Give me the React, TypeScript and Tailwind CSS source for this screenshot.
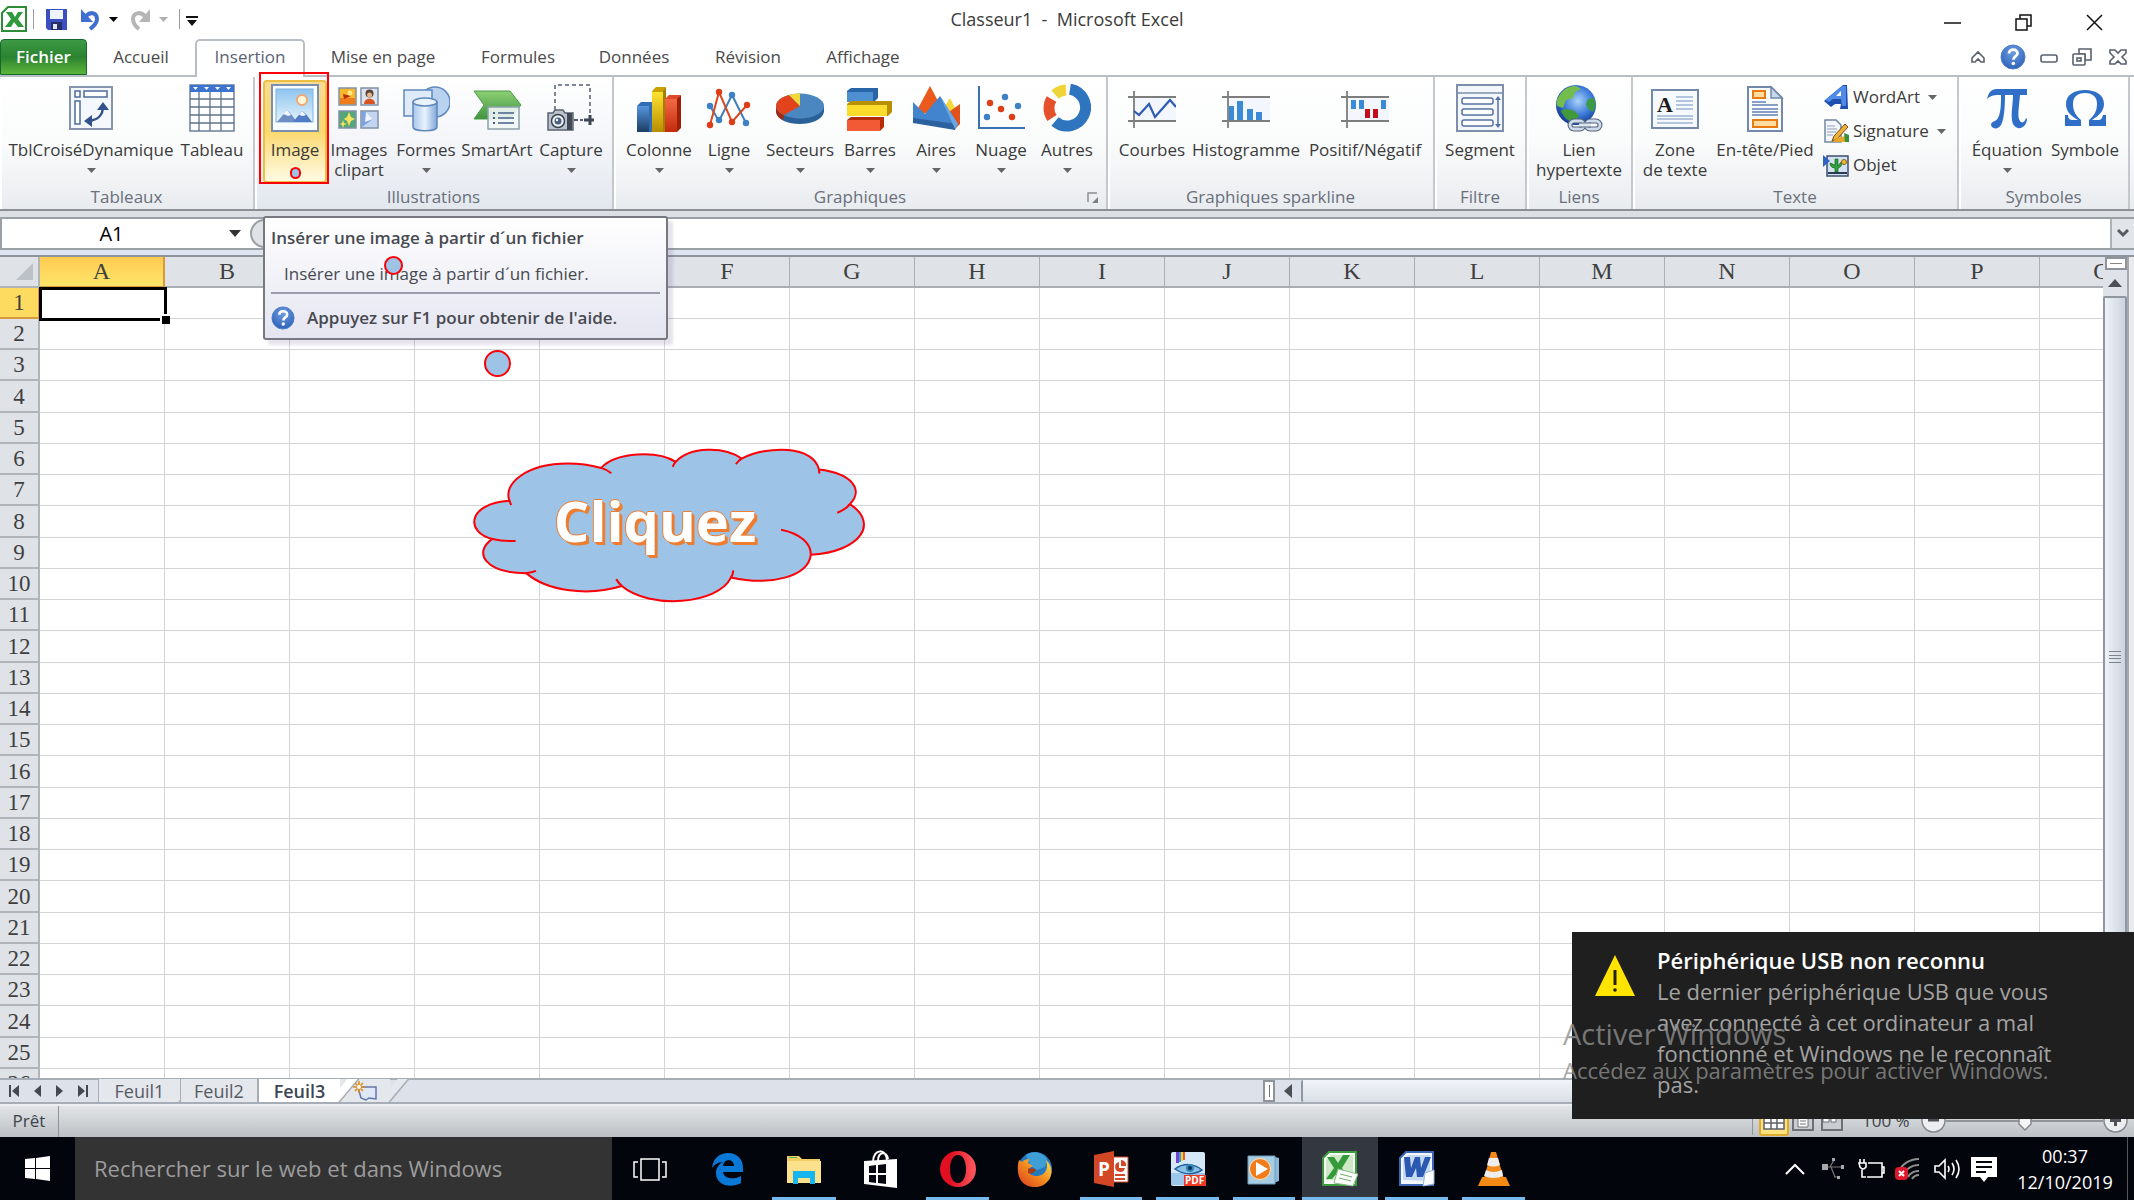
import React from "react";

type Kids = { children?: React.ReactNode };

/* ---------- shared drawing helpers ---------- */

function Icon({ children, w = 48, h = 48, box }: Kids & { w?: number; h?: number; box?: string }) {
  return (
    <svg width={w} height={h} viewBox={box ?? `0 0 ${w} ${h}`} aria-hidden="true" className="block shrink-0">
      {children}
    </svg>
  );
}

function Caret({ className = "text-[#666]" }: { className?: string }) {
  return (
    <svg width="9" height="5" viewBox="0 0 9 5" aria-hidden="true" className={`shrink-0 ${className}`}>
      <path d="M0 0h9L4.500 5z" fill="currentColor" />
    </svg>
  );
}

function HelpIcon({ size = 26 }: { size?: number }) {
  return (
    <svg width={size} height={size} viewBox="0 0 26 26" aria-hidden="true">
      <defs>
        <radialGradient id="help" cx="0.5" cy="0.3" r="0.7">
          <stop offset="0" stopColor="#6e9de0" />
          <stop offset="1" stopColor="#2f62b8" />
        </radialGradient>
      </defs>
      <circle cx="13" cy="13" r="12" fill="url(#help)" stroke="#4c7fcb" />
      <path d="M9 9.500c0-5 8.500-5 8.500-.3 0 3.300-4.200 3-4.200 6.600" fill="none" stroke="#fff" strokeWidth="2.800" />
      <circle cx="13.300" cy="19.500" r="1.800" fill="#fff" />
    </svg>
  );
}

/* ---------- ribbon icons ---------- */

const PivotIcon = () => (
  <Icon>
    <rect x="3" y="3" width="42" height="42" fill="#f4f7fb" stroke="#8595ad" strokeWidth="2" />
    <g fill="#fff" stroke="#4d6c9c" strokeWidth="1.500">
      <rect x="8" y="7" width="5" height="6" />
      <rect x="17" y="7" width="23" height="6" />
      <rect x="8" y="17" width="5" height="23" />
    </g>
    <path d="M21 37c10-1 15-5 15-15" fill="none" stroke="#33528c" strokeWidth="2.500" />
    <path d="M17 37l8-6v12zM36 18l6 8H30z" fill="#33528c" />
  </Icon>
);

const TableIcon = () => (
  <Icon>
    <rect x="2" y="1" width="44" height="46" fill="#fff" stroke="#6d7f9c" strokeWidth="1.500" />
    <rect x="2" y="1" width="44" height="7" fill="#3a74cf" />
    <path d="M5 3h5l-2.500 3zM16 3h5l-2.500 3zM27 3h5l-2.500 3zM38 3h5l-2.500 3z" fill="#fff" />
    <path d="M2 15h44M2 23h44M2 31h44M2 39h44M11 8v39M22 8v39M33 8v39" stroke="#5f738f" strokeWidth="1.300" />
  </Icon>
);

const PictureIcon = () => (
  <Icon>
    <defs>
      <linearGradient id="sky" x1="0" y1="0" x2="0" y2="1">
        <stop offset="0" stopColor="#8fc4ee" />
        <stop offset="1" stopColor="#e3f3fc" />
      </linearGradient>
    </defs>
    <rect x="1" y="1" width="46" height="46" fill="#f9fcff" stroke="#7a8fb0" strokeWidth="2" />
    <rect x="5" y="5" width="37" height="33" fill="url(#sky)" stroke="#7fb2de" />
    <circle cx="31" cy="16" r="5" fill="#fff6d8" stroke="#f0a874" strokeWidth="2" />
    <path d="M6 38l10-12 4 4 6 8z" fill="#6f8fc4" />
    <path d="M12 30l4-4 4 5-3 1-2-1z" fill="#f2f6fc" />
    <path d="M22 38l9-11 4 3 6 8z" fill="#4f7cc4" />
    <path d="M28 31l3-4 4 4-3 1z" fill="#f2f6fc" />
  </Icon>
);

const ClipartIcon = () => (
  <Icon>
    <rect x="4" y="4" width="17" height="17" fill="#f9b72b" stroke="#8090a8" strokeWidth="1.500" />
    <path d="M5 14h15v6H5z" fill="#ef7d1b" />
    <path d="M8 10l8 2-7 3z" fill="#b92b12" />
    <circle cx="15" cy="9" r="2.500" fill="#ffe784" />
    <rect x="26" y="4" width="17" height="17" fill="#dbe3ee" stroke="#8090a8" strokeWidth="1.500" />
    <circle cx="34.500" cy="9.500" r="4" fill="#5c4338" />
    <circle cx="34.500" cy="11" r="2.500" fill="#e8b48c" />
    <path d="M29 20c0-7 11-7 11 0z" fill="#d9541e" />
    <rect x="4" y="27" width="17" height="17" fill="#56a67a" stroke="#8090a8" strokeWidth="1.500" />
    <path d="M14 28l2 5 4 2-4 2-2 5-2-5-3-2 3-2zM8 36l1 3 3 1-3 1-1 3-1-3-2-1 2-1z" fill="#f3e35c" />
    <rect x="26" y="27" width="17" height="17" fill="#c3d5f1" stroke="#8090a8" strokeWidth="1.500" />
    <path d="M31 28l7 7-11 8V28z" fill="#7fa3df" />
    <path d="M31 28l7 7-8 3z" fill="#eef4fd" />
  </Icon>
);

const ShapesIcon = () => (
  <Icon>
    <defs>
      <linearGradient id="cyl" x1="0" y1="0" x2="1" y2="0">
        <stop offset="0" stopColor="#a8c6ea" />
        <stop offset="0.5" stopColor="#e9f3fd" />
        <stop offset="1" stopColor="#7fa6d8" />
      </linearGradient>
    </defs>
    <circle cx="33" cy="18" r="15" fill="#b9d2f0" stroke="#5f88bd" strokeWidth="1.500" />
    <rect x="2" y="6" width="28" height="26" fill="#dfebf8" stroke="#5f88bd" strokeWidth="1.500" />
    <path d="M11 18v25c0 5 24 5 24 0V18z" fill="url(#cyl)" stroke="#5f88bd" strokeWidth="1.500" />
    <ellipse cx="23" cy="18" rx="12" ry="4" fill="#eaf3fc" stroke="#5f88bd" strokeWidth="1.500" />
  </Icon>
);

const SmartArtIcon = () => (
  <Icon>
    <defs>
      <linearGradient id="sa" x1="0" y1="0" x2="0" y2="1">
        <stop offset="0" stopColor="#8ccf74" />
        <stop offset="1" stopColor="#3f9440" />
      </linearGradient>
    </defs>
    <path d="M1 7h36l11 14-11 14H1l10-14z" fill="url(#sa)" stroke="#4a9a49" />
    <rect x="15" y="23" width="31" height="22" fill="#f1f6f6" fillOpacity="0.9" stroke="#8ba1a8" strokeWidth="1.500" />
    <path d="M25 29h16M25 34h16M25 39h16" stroke="#46608c" strokeWidth="1.500" />
    <path d="M20 29h2M20 34h2M20 39h2" stroke="#46608c" strokeWidth="2" />
  </Icon>
);

const CaptureIcon = () => (
  <Icon>
    <path d="M8 26V1h35v30" fill="none" stroke="#555f70" strokeWidth="1.500" strokeDasharray="4 3" />
    <path d="M43 31v10M37 36h10" stroke="#3c4654" strokeWidth="3" />
    <path d="M27 36h9" stroke="#555f70" strokeWidth="2" strokeDasharray="4 2" />
    <path d="M1 29h5l2-3h8l2 3h8v17H1z" fill="#bcc3cc" stroke="#596372" strokeWidth="1.500" />
    <rect x="20" y="29" width="5" height="17" fill="#404954" />
    <circle cx="11" cy="37" r="6.500" fill="#eef1f5" stroke="#39424e" strokeWidth="1.500" />
    <circle cx="11" cy="37" r="3.500" fill="#47617f" />
    <circle cx="10" cy="36" r="1.200" fill="#fff" />
  </Icon>
);

const ColumnIcon = () => (
  <Icon>
    <defs>
      <linearGradient id="cb" x1="0" y1="0" x2="0" y2="1">
        <stop offset="0" stopColor="#5596de" />
        <stop offset="1" stopColor="#1d3c62" />
      </linearGradient>
      <linearGradient id="cy" x1="0" y1="0" x2="0" y2="1">
        <stop offset="0" stopColor="#ffe32f" />
        <stop offset="1" stopColor="#b88d00" />
      </linearGradient>
      <linearGradient id="cr" x1="0" y1="0" x2="0" y2="1">
        <stop offset="0" stopColor="#f36a44" />
        <stop offset="1" stopColor="#c22a0c" />
      </linearGradient>
    </defs>
    <path d="M2 22l4-4h11v30H2z" fill="#2f6cb3" />
    <rect x="2" y="22" width="12" height="26" fill="url(#cb)" />
    <path d="M17 7l4-4h10l-3 5v40H17z" fill="#c9a200" />
    <path d="M28 7l3-4v45h-3z" fill="#a47f00" />
    <rect x="17" y="8" width="11" height="40" fill="url(#cy)" />
    <path d="M30 15l4-4h12l-4 5z" fill="#e04a28" />
    <path d="M42 15l4-4v33l-4 4z" fill="#9f1f06" />
    <rect x="30" y="15" width="12" height="33" fill="url(#cr)" />
  </Icon>
);

const LineIcon = () => (
  <Icon>
    <path d="M5 22l9 15 13-26 14 28" fill="none" stroke="#3f7fb8" strokeWidth="2" />
    <path d="M5 41l9-33 13 30 15-17" fill="none" stroke="#d9471f" strokeWidth="2" />
    <g fill="#3f7fc4"><circle cx="5" cy="22" r="3.200" /><circle cx="14" cy="36" r="3.200" /><circle cx="27" cy="11" r="3.200" /><circle cx="41" cy="39" r="3.200" /></g>
    <g fill="#dd3e17"><circle cx="5" cy="41" r="3.200" /><circle cx="14" cy="8" r="3.200" /><circle cx="27" cy="38" r="3.200" /><circle cx="42" cy="21" r="3.200" /></g>
  </Icon>
);

const PieIcon = () => (
  <Icon>
    <path d="M0 23v5c2 16 45 16 48 0v-5z" fill="#2b6199" />
    <path d="M0 23v5c1 4 3 6 7 8l1-5z" fill="#a52a0d" />
    <ellipse cx="24" cy="22" rx="24" ry="12.500" fill="#4a86c0" />
    <path d="M24 22L8 31C-4 25-2 15 13 11z" fill="#e2431b" />
    <path d="M24 22L13 11q5-2 11-1.500z" fill="#f4d836" />
  </Icon>
);

const BarIcon = () => (
  <Icon>
    <path d="M1 7l4-3h27v10l-4 4H1z" fill="#2764a8" />
    <rect x="1" y="8" width="26" height="10" fill="#4e8fd2" />
    <path d="M1 20l4-3h41v11l-4 4H1z" fill="#b89000" />
    <rect x="1" y="21" width="40" height="11" fill="#fbdc2c" />
    <path d="M1 36l4-3h33v10l-4 4H1z" fill="#b52c0d" />
    <rect x="1" y="36" width="33" height="11" fill="#f15a35" />
  </Icon>
);

const AreaIcon = () => (
  <Icon>
    <path d="M28 30l10-16 6 12v14z" fill="#f5d93a" />
    <path d="M34 30l14-10v20l-4 4z" fill="#e2521d" />
    <path d="M3 30L18 2l14 26z" fill="#ea5a1c" />
    <path d="M1 18l12 12 15-18 18 28-3 5L1 38z" fill="#4284cd" />
    <path d="M1 34l44 6-2 6L1 39z" fill="#2c61a0" />
    <path d="M28 12l18 28-3 5z" fill="#6ba6e4" />
  </Icon>
);

const ScatterIcon = () => (
  <Icon>
    <path d="M2 2v42h46" fill="none" stroke="#3a72b0" strokeWidth="2" />
    <g fill="#3f7fc4"><circle cx="10" cy="33" r="3.200" /><circle cx="28" cy="13" r="3.200" /><circle cx="41" cy="22" r="3.200" /></g>
    <g fill="#dd3e17"><circle cx="13" cy="19" r="3.200" /><circle cx="24" cy="25" r="3.200" /><circle cx="35" cy="33" r="3.200" /></g>
  </Icon>
);

const DonutIcon = () => (
  <Icon>
    <g fill="none" strokeWidth="11">
      <path d="M27 5.200A18.500 18.500 0 1 1 12 37.500" stroke="#2f74bf" />
      <path d="M9 34A18 18 0 0 1 8.500 15" stroke="#e5512b" />
      <path d="M12 10.500A18 18 0 0 1 23 6" stroke="#f0d437" />
    </g>
  </Icon>
);

function Spark({ children }: Kids) {
  return (
    <Icon>
      <rect x="5" y="13" width="43" height="23" fill="#f3f7fd" />
      <path d="M0 13h48M0 37h48M6 7v37" stroke="#7d7d7d" strokeWidth="1.800" />
      {children}
    </Icon>
  );
}

const SparkLineIcon = () => (
  <Spark><path d="M6 27l5 4 10-11 6 13 15-17 6 7" fill="none" stroke="#2f5bb5" strokeWidth="2.200" /></Spark>
);
const SparkColIcon = () => (
  <Spark><path d="M7 22h5v14H7zM15 17h6v19h-6zM25 25h6v11h-6zM34 28h6v8h-6z" fill="#3b8ad6" /></Spark>
);
const WinLossIcon = () => (
  <Spark>
    <path d="M10 16h5v9h-5zM18 16h5v9h-5zM40 16h5v9h-5z" fill="#3b8ad6" />
    <path d="M24 25h5v9h-5zM32 25h5v9h-5z" fill="#c40d1c" />
  </Spark>
);

const SlicerIcon = () => (
  <Icon>
    <rect x="1" y="1" width="46" height="46" fill="#f3f6fb" stroke="#7d8fa9" strokeWidth="2" />
    <path d="M1 9h46" stroke="#7d8fa9" strokeWidth="1.500" />
    <g fill="#fff" stroke="#5671a4" strokeWidth="1.500">
      <rect x="6" y="14" width="31" height="6" rx="2" />
      <rect x="6" y="25" width="31" height="6" rx="2" />
      <rect x="6" y="36" width="31" height="6" rx="2" />
    </g>
    <path d="M42 15v26" stroke="#5671a4" strokeWidth="1.500" />
    <path d="M42 12l3 4h-6zM42 44l3-4h-6z" fill="#5671a4" />
  </Icon>
);

const GlobeIcon = () => (
  <Icon>
    <defs>
      <radialGradient id="globe" cx="0.55" cy="0.4" r="0.6">
        <stop offset="0" stopColor="#a9d3f8" />
        <stop offset="0.6" stopColor="#3b78d8" />
        <stop offset="1" stopColor="#143d97" />
      </radialGradient>
    </defs>
    <circle cx="21" cy="21" r="20" fill="url(#globe)" />
    <path d="M4 12C9 4 15 2 21 2l5 3-6 3-2 6-7 2-3 8-6-2c-1-4 0-7 2-10z" fill="#74bd4d" />
    <path d="M9 25l9 1 6 5-4 8c-7-1-12-7-14-12z" fill="#429a3c" />
    <path d="M33 15l6-1c2 5 2 9-1 14l-5-3-2-5z" fill="#3d9a44" />
    <g fill="none" strokeWidth="5">
      <rect x="15" y="37" width="14" height="8" rx="4" stroke="#54657e" />
      <rect x="31" y="37" width="14" height="8" rx="4" stroke="#54657e" />
    </g>
    <g fill="none" strokeWidth="2.800">
      <rect x="15" y="37" width="14" height="8" rx="4" stroke="#cfdbea" />
      <rect x="31" y="37" width="14" height="8" rx="4" stroke="#cfdbea" />
    </g>
    <path d="M24 41h12" stroke="#54657e" strokeWidth="5" />
    <path d="M24 41h12" stroke="#dbe5f1" strokeWidth="3" />
  </Icon>
);

const TextBoxIcon = () => (
  <Icon>
    <rect x="1" y="6" width="46" height="38" fill="#f6f9fd" stroke="#7489aa" strokeWidth="2" />
    <text x="6" y="28" fontFamily="Liberation Serif" fontWeight="700" fontSize="22" fill="#1b1b1b">A</text>
    <path d="M25 13h17M25 17h17M25 21h17M25 25h17M6 32h36M6 35h36M6 39h36" stroke="#9fb4d4" strokeWidth="1.300" />
  </Icon>
);

const HeaderFooterIcon = () => (
  <Icon>
    <path d="M7 3h23l11 11v33H7z" fill="#fafcff" stroke="#7489aa" strokeWidth="2" />
    <path d="M30 3v11h11z" fill="#c8d8ec" stroke="#7489aa" strokeWidth="1.500" />
    <rect x="12" y="7" width="12" height="7" fill="#ffdca0" stroke="#e87b12" strokeWidth="2" />
    <rect x="12" y="36" width="24" height="7" fill="#ffdca0" stroke="#e87b12" strokeWidth="2" />
    <path d="M11 18h14M11 21h26M11 25h26M11 28h26M11 31h26" stroke="#6580b3" strokeWidth="1.400" />
  </Icon>
);

const PiIcon = () => (
  <Icon>
    <path d="M4 15C6 7 9 5 15 5h29v6h-7c-1 12-3 22 0 26 2 3 5 1 6-3l1 1c-1 12-14 12-15 1-1-8 1-16 1-25h-8c0 12-1 25-4 30-3 5-9 4-10 0 0-4 5-3 7-7 3-6 3-14 3-23-6 0-10 0-14 4z" fill="#2f6fc8" />
  </Icon>
);

const OmegaIcon = () => (
  <Icon>
    <path d="M4 42V31h3c0 4 2 5 5 5h5C8 31 5 26 5 20 5 11 13 6 24 6s19 5 19 14c0 6-4 11-12 16h6c3 0 4-1 5-5h3v11H28v-6c5-4 8-9 8-16 0-7-4-11-12-11s-12 4-12 11c0 7 3 12 8 16v6z" fill="#2f6fc8" />
  </Icon>
);

const WordArtIcon = () => (
  <Icon w={26} h={26}>
    <path d="M1 17L20 1h4l1 24h-8l1-5h-6l-4 3z" fill="#1f4fae" />
    <path d="M2 16L19 2h4v20h-4l-1-7H10l-4 3z" fill="#4f8be6" />
    <path d="M13 12l5-5v5z" fill="#fff" />
  </Icon>
);
const SignatureIcon = () => (
  <Icon w={26} h={26}>
    <path d="M2 2h11l5 5v17H2z" fill="#f3f6fa" stroke="#7287a3" strokeWidth="1.500" />
    <path d="M4 8h8M4 11h10M4 14h9M4 17h6" stroke="#8ea1bc" />
    <path d="M22 6l3 3-11 12-5 2 2-5z" fill="#f0b13a" stroke="#7a4a14" />
    <path d="M10 24c4-6 9-5 14-6v6z" fill="#e6a92a" />
    <path d="M21 15l5 2v7h-4z" fill="#3b8f3a" />
  </Icon>
);
const ObjectIcon = () => (
  <Icon w={26} h={26}>
    <rect x="4" y="4" width="21" height="20" fill="#d4e1f1" stroke="#3d4f6e" strokeWidth="1.500" />
    <path d="M0 3l7 6-7 6z" fill="#2f63c4" />
    <path d="M12 20v-4c-3 0-5-2-5-5l5 2V7h3v7l3-4c2 3-1 6-3 6v4z" fill="#2f9e3b" stroke="#166a22" strokeWidth="0.700" />
    <circle cx="21" cy="10" r="2.500" fill="#f0bb2e" stroke="#8a6514" />
    <path d="M5 21h19" stroke="#2b3a54" strokeWidth="2" />
  </Icon>
);

/* ---------- ribbon ---------- */

function BigButton({ icon, label, second, caret, width, active }: {
  icon: React.ReactNode; label: string; second?: string; caret?: boolean; width: string; active?: boolean;
}) {
  return (
    <button
      type="button"
      className={`flex shrink-0 flex-col items-center rounded-[4px] whitespace-nowrap ${width} ${
        active ? "h-[103px] border-2 border-[#eebf45] bg-linear-to-b from-[#f7dc93] via-[#fbd96c] to-[#fffbe3] pt-[2px]" : "pt-1"
      }`}
    >
      {icon}
      <span className="mt-[7px] leading-[21px]">{label}</span>
      {second && <span className="leading-[20px]">{second}</span>}
      {caret && <Caret className="mt-2 text-[#666]" />}
    </button>
  );
}

function Group({ title, width, pad, children, tint, launcher }: Kids & {
  title: string; width: string; pad: string; tint?: boolean; launcher?: boolean;
}) {
  return (
    <section
      aria-label={title}
      className={`relative flex shrink-0 flex-col border-r-2 border-[#c3c8ce] shadow-[inset_2px_0_0_#fff] ${width} ${
        tint ? "bg-linear-to-b from-white via-[#f3f5f9] to-[#e2e7ee]" : ""
      }`}
    >
      <div className={`flex flex-1 ${pad}`}>{children}</div>
      <h2 className="pb-px text-center text-[17px] leading-[22px] text-[#6a6f7b]">{title}</h2>
      {launcher && (
        <button type="button" aria-label={`Options ${title}`} className="absolute right-[7px] bottom-[5px]">
          <Icon w={12} h={12}>
            <path d="M1 10V1h9" fill="none" stroke="#8a8f96" strokeWidth="1.500" />
            <path d="M5 5l3 3 3-3v6H5l3-3z" fill="#7b8087" />
          </Icon>
        </button>
      )}
    </section>
  );
}

function SmallButton({ icon, label, caret }: { icon: React.ReactNode; label: string; caret?: boolean }) {
  return (
    <button type="button" className="flex h-[34px] items-center gap-1">
      {icon}
      <span>{label}</span>
      {caret && <Caret className="ml-1 text-[#666]" />}
    </button>
  );
}

function Ribbon() {
  return (
    <div className="relative flex h-[134px] border-b-2 border-[#8b9097] bg-linear-to-b from-white via-[#fafbfb] to-[#e9ecef] text-[17px] text-[#3b3b3b]">
      <Group title="Tableaux" width="w-[255px]" pad="pl-[3px] pt-[3px]">
        <BigButton icon={<PivotIcon />} label="TblCroiséDynamique" caret width="w-[176px]" />
        <BigButton icon={<TableIcon />} label="Tableau" width="w-[66px]" />
      </Group>
      <Group title="Illustrations" width="w-[359px]" pad="pl-[8px] pt-[3px]" tint>
        <BigButton icon={<PictureIcon />} label="Image" width="w-[64px]" active />
        <BigButton icon={<ClipartIcon />} label="Images" second="clipart" width="w-[64px]" />
        <BigButton icon={<ShapesIcon />} label="Formes" caret width="w-[70px]" />
        <BigButton icon={<SmartArtIcon />} label="SmartArt" width="w-[72px]" />
        <BigButton icon={<CaptureIcon />} label="Capture" caret width="w-[76px]" />
      </Group>
      <Group title="Graphiques" width="w-[494px]" pad="pl-[8px] pt-[3px]" launcher>
        <BigButton icon={<ColumnIcon />} label="Colonne" caret width="w-[74px]" />
        <BigButton icon={<LineIcon />} label="Ligne" caret width="w-[66px]" />
        <BigButton icon={<PieIcon />} label="Secteurs" caret width="w-[76px]" />
        <BigButton icon={<BarIcon />} label="Barres" caret width="w-[64px]" />
        <BigButton icon={<AreaIcon />} label="Aires" caret width="w-[68px]" />
        <BigButton icon={<ScatterIcon />} label="Nuage" caret width="w-[62px]" />
        <BigButton icon={<DonutIcon />} label="Autres" caret width="w-[70px]" />
      </Group>
      <Group title="Graphiques sparkline" width="w-[327px]" pad="pl-[5px] pt-[3px]">
        <BigButton icon={<SparkLineIcon />} label="Courbes" width="w-[78px]" />
        <BigButton icon={<SparkColIcon />} label="Histogramme" width="w-[110px]" />
        <BigButton icon={<WinLossIcon />} label="Positif/Négatif" width="w-[128px]" />
      </Group>
      <Group title="Filtre" width="w-[92px]" pad="justify-center pt-[3px]">
        <BigButton icon={<SlicerIcon />} label="Segment" width="w-[76px]" />
      </Group>
      <Group title="Liens" width="w-[106px]" pad="justify-center pt-[3px]">
        <BigButton icon={<GlobeIcon />} label="Lien" second="hypertexte" width="w-[90px]" />
      </Group>
      <Group title="Texte" width="w-[326px]" pad="pl-[6px] pt-[3px]">
        <BigButton icon={<TextBoxIcon />} label="Zone" second="de texte" width="w-[72px]" />
        <BigButton icon={<HeaderFooterIcon />} label="En-tête/Pied" width="w-[108px]" />
        <div className="flex flex-col pl-[4px]">
          <SmallButton icon={<WordArtIcon />} label="WordArt" caret />
          <SmallButton icon={<SignatureIcon />} label="Signature" caret />
          <SmallButton icon={<ObjectIcon />} label="Objet" />
        </div>
      </Group>
      <Group title="Symboles" width="w-[171px]" pad="pl-[9px] pt-[3px]">
        <BigButton icon={<PiIcon />} label="Équation" caret width="w-[78px]" />
        <BigButton icon={<OmegaIcon />} label="Symbole" width="w-[78px]" />
      </Group>
      <div className="pointer-events-none absolute top-[-5px] left-[259px] h-[112px] w-[70px] border-2 border-[#fb0007]" />
      <div className="pointer-events-none absolute top-[90px] left-[290px] h-[12px] w-[11px] rounded-full border-2 border-[#fb0007] bg-[#9dc3e6]" />
    </div>
  );
}

/* ---------- title bar and tabs ---------- */

function TitleBar() {
  return (
    <header className="grid h-[38px] grid-cols-[1fr_auto_1fr] items-center bg-white">
      <div className="flex items-center pl-[1px]">
        <Icon w={26} h={26}>
          <path d="M7 1h18v24H1V7z" fill="#fff" stroke="#2e8b37" strokeWidth="2" />
          <path d="M5 6h6l3 5 3-5h5l-5 7 6 8h-6l-4-5-3 5H4l6-8z" fill="#2f9a3c" />
        </Icon>
        <span className="ml-[6px] h-5 w-px bg-[#9a9a9a]" />
        <button type="button" aria-label="Enregistrer" className="ml-[11px]">
          <Icon w={23} h={23}>
            <path d="M1 1h21v21H3l-2-2z" fill="#3b4fc0" />
            <path d="M5 2h13v9H5z" fill="#eef3fc" />
            <path d="M6 14h11v8H6z" fill="#272e63" />
            <path d="M8 16h4v5H8z" fill="#dfe5f5" />
          </Icon>
        </button>
        <button type="button" aria-label="Annuler" className="ml-3 flex items-center gap-2">
          <Icon w={21} h={24}>
            <path d="M6 9c5-5 11-3 11 3 0 4-3 7-7 10" fill="none" stroke="#3f6fd0" strokeWidth="4" />
            <path d="M1 2v13h12z" fill="#3f6fd0" />
          </Icon>
          <Caret className="text-black" />
        </button>
        <button type="button" aria-label="Rétablir" className="ml-3 flex items-center gap-2">
          <Icon w={21} h={24}>
            <path d="M15 9C10 4 3 6 3 12c0 4 2 7 6 10" fill="none" stroke="#b5b5b5" strokeWidth="4" />
            <path d="M20 2v13H9z" fill="#b5b5b5" />
          </Icon>
          <Caret className="text-[#b0b0b0]" />
        </button>
        <span className="ml-[11px] h-5 w-px bg-[#9a9a9a]" />
        <button type="button" aria-label="Personnaliser" className="mt-1 ml-[6px]">
          <Icon w={12} h={10}>
            <path d="M0 0h12v2H0zM1 4h10L6 10z" fill="#111" />
          </Icon>
        </button>
      </div>
      <h1 className="text-[18px] whitespace-pre text-[#3a3a3a]">Classeur1  -  Microsoft Excel</h1>
      <div className="flex items-center justify-end gap-[54px] pt-[6px] pr-[31px]">
        <button type="button" aria-label="Réduire"><Icon w={17} h={17}><path d="M0 9h17" stroke="#111" strokeWidth="1.500" /></Icon></button>
        <button type="button" aria-label="Restaurer">
          <Icon w={17} h={17}><path d="M1 5h11v11H1zM5 5V1h11v11h-4" fill="none" stroke="#111" strokeWidth="1.500" /></Icon>
        </button>
        <button type="button" aria-label="Fermer"><Icon w={17} h={17}><path d="M1 1l15 15M16 1L1 16" stroke="#111" strokeWidth="1.500" /></Icon></button>
      </div>
    </header>
  );
}

const menuTabs: [string, string][] = [
  ["Mise en page", "w-[156px]"],
  ["Formules", "w-[114px]"],
  ["Données", "w-[118px]"],
  ["Révision", "w-[110px]"],
  ["Affichage", "w-[120px]"],
];

function MenuTabs() {
  return (
    <nav className="flex h-[39px] items-stretch border-b-2 border-[#b9bec5] bg-white text-[17px] text-[#4a4a4a]">
      <button type="button" className="mt-px w-[87px] rounded-t-[4px] border border-[#15692a] bg-linear-to-b from-[#3d9a45] via-[#2a8330] to-[#5cb53b] font-semibold text-white">Fichier</button>
      <button type="button" className="w-[108px]">Accueil</button>
      <button type="button" className="mt-px -mb-[2px] w-[110px] rounded-t-[5px] border-2 border-b-0 border-[#b9bec5] bg-white pb-1 text-[#5a6272]">Insertion</button>
      {menuTabs.map(([t, w]) => (
        <button key={t} type="button" className={w}>{t}</button>
      ))}
      <div className="ml-auto flex items-center gap-[14px] pr-[7px]">
        <button type="button" aria-label="Réduire le ruban">
          <Icon w={16} h={14}><path d="M2 8l6-6 6 6v4h-3L8 9l-3 3H2z" fill="#fff" stroke="#59616d" strokeWidth="1.600" /></Icon>
        </button>
        <button type="button" aria-label="Aide"><HelpIcon /></button>
        <button type="button" aria-label="Réduire la fenêtre" className="mt-1">
          <Icon w={18} h={10}><rect x="1" y="1" width="16" height="7" rx="2" fill="#fff" stroke="#59616d" strokeWidth="1.600" /></Icon>
        </button>
        <button type="button" aria-label="Restaurer la fenêtre">
          <Icon w={20} h={18}>
            <path d="M7 1h12v11h-6V6H7z" fill="#fff" stroke="#59616d" strokeWidth="1.600" />
            <rect x="1" y="6" width="12" height="11" rx="1" fill="#fff" stroke="#59616d" strokeWidth="1.600" />
            <rect x="5" y="10" width="4" height="3" fill="none" stroke="#59616d" strokeWidth="1.600" />
          </Icon>
        </button>
        <button type="button" aria-label="Fermer la fenêtre" className="ml-[3px]">
          <Icon w={18} h={16}>
            <path d="M1 1h5l3 3 3-3h5v3l-4 4 4 4v3h-5l-3-3-3 3H1v-3l4-4-4-4z" fill="#fff" stroke="#59616d" strokeWidth="1.600" />
          </Icon>
        </button>
      </div>
    </nav>
  );
}

/* ---------- formula bar ---------- */

function FormulaBar() {
  return (
    <div className="border-t-[6px] border-[#dcdfe3] bg-[#dfe4ec]">
      <div className="flex h-[33px] border-y-2 border-[#9ba0a6] bg-white">
        <div className="flex w-[250px] items-center border-l-2 border-[#9ba0a6]">
          <input aria-label="Zone Nom" defaultValue="A1" className="w-[219px] bg-transparent text-center text-[20px] text-black outline-none" />
          <svg width="12" height="7" viewBox="0 0 12 7" aria-hidden="true" className="ml-2"><path d="M0 0h12L6 7z" fill="#333" /></svg>
        </div>
        <div className="w-[30px] rounded-l-full border-2 border-[#9ba0a6] bg-[#dfe3e8]" />
        <input aria-label="Barre de formule" className="flex-1 bg-transparent outline-none" />
        <button type="button" aria-label="Développer la barre" className="flex w-[24px] items-center justify-center border-l-2 border-[#aeb3b9] bg-[#e2e5e9]">
          <Icon w={12} h={9}><path d="M1 1l5 5 5-5" fill="none" stroke="#555b63" strokeWidth="3" /></Icon>
        </button>
      </div>
      <div className="h-[7px] border-b-2 border-[#8f949b] bg-[#dfe5f0]" />
    </div>
  );
}

/* ---------- grid ---------- */

const columns = "ABCDEFGHIJKLMNOPQ".split("");
const rows = Array.from({ length: 26 }, (_, i) => i + 1);

function Sheet() {
  return (
    <div className="flex min-h-0 flex-1 bg-white">
      <div className="min-w-0 flex-1 overflow-hidden">
        <table className="w-[2165px] table-fixed border-separate border-spacing-0 font-[Liberation_Serif,serif] text-[24px] text-[#3f3f3f]">
          <thead>
            <tr className="h-[31px] bg-[#dfe3e8]">
              <th className="w-[40px] border-r-2 border-b-2 border-[#b0b5bc] p-0">
                <svg width="17" height="17" viewBox="0 0 17 17" aria-hidden="true" className="ml-4"><path d="M17 0v17H0z" fill="#bcc1c7" /></svg>
              </th>
              {columns.map((c) => (
                <th
                  key={c}
                  scope="col"
                  className={`border-b-2 p-0 leading-[29px] font-normal ${
                    c === "A" ? "border-r-2 border-[#d69b3c] bg-linear-to-b from-[#fdcb4f] to-[#fee66b]" : "border-r border-[#a9aeb5]"
                  }`}
                >
                  {c}
                </th>
              ))}
            </tr>
          </thead>
          <tbody>
            {rows.map((r) => (
              <tr key={r} className="h-[31px] nth-[4n]:h-[32px]">
                <th
                  scope="row"
                  className={`border-r-2 border-b-2 p-0 text-center text-[23px] leading-[29px] font-normal ${
                    r === 1 ? "border-[#d69b3c] bg-[#fdda60]" : "border-[#b0b5bc] bg-[#dfe3e8]"
                  }`}
                >
                  {r}
                </th>
                {columns.map((c) => (
                  <td key={c} className="relative border-r border-b border-[#d2d5d6] p-0">
                    {r === 1 && c === "A" && (
                      <div className="absolute -top-px -right-[3px] -bottom-[3px] -left-px z-10 border-[3px] border-black">
                        <span className="absolute -right-[6px] -bottom-[6px] h-[10px] w-[10px] border-t-2 border-l-2 border-white bg-black" />
                      </div>
                    )}
                  </td>
                ))}
              </tr>
            ))}
          </tbody>
        </table>
      </div>
      <div className="flex w-[31px] shrink-0 bg-[#e9ebef]">
        <div className="flex w-[26px] flex-col border-r-2 border-[#a4a9b0] bg-[#dfe3e9]">
          <div className="ml-[2px] flex h-[13px] items-center justify-center border-2 border-[#8f949b] bg-white"><span className="h-px w-3 bg-[#888]" /></div>
          <button type="button" aria-label="Défiler vers le haut" className="flex h-[26px] items-center justify-center">
            <Icon w={14} h={8}><path d="M0 8l7-8 7 8z" fill="#4c4f54" /></Icon>
          </button>
          <div className="flex flex-1 justify-center rounded-[2px] border-2 border-[#8f97a2] bg-linear-to-r from-[#f0f3f8] to-[#ccd3de]">
            <div className="mt-[353px] flex h-[12px] flex-col justify-between">
              {[0, 1, 2, 3].map((i) => <span key={i} className="h-px w-3 bg-[#7c828b]" />)}
            </div>
          </div>
        </div>
      </div>
    </div>
  );
}

/* ---------- sheet tabs, status bar ---------- */

function SheetTab({ label, active, width, last }: { label: string; active?: boolean; width: string; last?: boolean }) {
  return (
    <button
      type="button"
      className={`relative flex h-[24px] items-center justify-center border-b border-[#a7adb6] after:absolute after:inset-y-0 after:-right-[10px] after:w-[12px] after:-skew-x-[40deg] after:border-r-2 after:border-[#a7adb6] ${width} ${
        active ? "z-10 border-l-2 bg-white font-semibold text-[#3d4654] after:bg-white" : "border-l bg-[#e4e7eb] text-[#565b63] after:bg-[#e4e7eb]"
      } ${last ? "after:hidden" : ""}`}
    >
      <span className="relative z-10">{label}</span>
    </button>
  );
}

function SheetTabs() {
  return (
    <div className="flex h-[26px] border-t-2 border-b-2 border-[#a7adb6] bg-[#dce1ea] text-[18px] leading-[22px]">
      <div className="flex w-[98px] items-center justify-between pr-[10px] pl-[9px] text-[#434851]">
        <button type="button" aria-label="Première feuille"><Icon w={11} h={12}><path d="M0 0h2v12H0zM10 0v12L3 6z" fill="currentColor" /></Icon></button>
        <button type="button" aria-label="Feuille précédente"><Icon w={8} h={12}><path d="M7 0v12L0 6z" fill="currentColor" /></Icon></button>
        <button type="button" aria-label="Feuille suivante"><Icon w={8} h={12}><path d="M1 0v12l7-6z" fill="currentColor" /></Icon></button>
        <button type="button" aria-label="Dernière feuille"><Icon w={11} h={12}><path d="M9 0h2v12H9zM1 0v12l7-6z" fill="currentColor" /></Icon></button>
      </div>
      <div className="-mt-px flex">
        <SheetTab label="Feuil1" width="w-[82px]" />
        <SheetTab label="Feuil2" width="w-[77px]" last />
        <SheetTab label="Feuil3" width="w-[83px]" active />
        <button type="button" aria-label="Insérer une feuille" className="relative flex h-[24px] w-[50px] items-center justify-center border-b border-[#a7adb6] bg-[#e4e7eb] after:absolute after:inset-y-0 after:-right-[10px] after:w-[12px] after:-skew-x-[40deg] after:border-r-2 after:border-[#a7adb6] after:bg-[#e4e7eb]">
          <span className="relative z-10">
            <Icon w={24} h={20}>
              <path d="M5 6h18v12l-7-1-3 2-5-2z" fill="#dfe7f6" stroke="#6078aa" strokeWidth="1.500" />
              <path d="M6 0v12M0 6h12M2 2l8 8M10 2l-8 8" stroke="#e08a17" strokeWidth="1.500" />
              <circle cx="6" cy="6" r="2" fill="#fff" />
            </Icon>
          </span>
        </button>
      </div>
      <div className="ml-auto flex w-[871px]">
        <div className="flex w-[12px] items-center justify-center border-2 border-[#8f949b] bg-white"><span className="h-3 w-px bg-[#777]" /></div>
        <button type="button" aria-label="Défiler à gauche" className="flex w-[26px] items-center justify-center"><Icon w={8} h={14}><path d="M8 0v14L0 7z" fill="#4c4f54" /></Icon></button>
        <div className="flex-1 rounded-[2px] border-l-2 border-[#8f97a2] bg-linear-to-b from-[#f1f4f9] to-[#dadfe7]" />
      </div>
    </div>
  );
}

function StatusBar() {
  return (
    <div className="flex h-[33px] items-center border-t-2 border-[#eceef0] bg-linear-to-b from-[#e2e5e8] to-[#bcc0c4] text-[17px] text-[#40444a]">
      <span className="w-[58px] pb-[2px] text-center">Prêt</span>
      <span className="h-full w-px bg-[#8f949a]" />
      <div className="ml-auto flex h-full items-center pb-[2px]">
        <span className="h-full w-px bg-[#8f949a]" />
        <button type="button" aria-label="Normal" className="ml-[6px] flex h-[30px] w-[30px] items-center justify-center rounded-[3px] border-2 border-[#e0a92f] bg-[#fce27c]">
          <Icon w={22} h={18}><path d="M1 1h20v16H1zM1 6h20M1 11h20M8 1v16M14 1v16" fill="#fff" stroke="#5c6068" strokeWidth="1.500" /></Icon>
        </button>
        <button type="button" aria-label="Mise en page" className="ml-[3px]">
          <Icon w={22} h={20}><path d="M1 1h20v18H1z" fill="#c9ccd0" stroke="#6d7279" strokeWidth="2" /><path d="M6 3h10v13H6z" fill="#fff" stroke="#6d7279" /><path d="M8 7h6M8 10h6M8 13h6" stroke="#6d7279" /></Icon>
        </button>
        <button type="button" aria-label="Aperçu des sauts de page" className="ml-[7px]">
          <Icon w={22} h={20}><path d="M1 1h20v18H1z" fill="#c9ccd0" stroke="#6d7279" strokeWidth="2" /><path d="M2 2h6v9H2zM10 2h5v9h-5z" fill="#fff" stroke="#6d7279" /></Icon>
        </button>
        <span className="ml-[19px] w-[59px]">100 %</span>
        <button type="button" aria-label="Zoom arrière">
          <Icon w={25} h={25}><circle cx="12.500" cy="12.500" r="11.500" fill="#eceef0" stroke="#83888f" strokeWidth="1.500" /><path d="M7 12h11" stroke="#4c5057" strokeWidth="3" /></Icon>
        </button>
        <div className="relative flex h-6 w-[157px] items-center">
          <span className="h-[2px] w-full bg-[#8f949a]" />
          <span className="absolute left-[72px]">
            <Icon w={14} h={22}><path d="M1 1h12v13l-6 6-6-6z" fill="#f4f5f7" stroke="#83888f" strokeWidth="1.500" /></Icon>
          </span>
        </div>
        <button type="button" aria-label="Zoom avant" className="mr-[6px]">
          <Icon w={25} h={25}><circle cx="12.500" cy="12.500" r="11.500" fill="#eceef0" stroke="#83888f" strokeWidth="1.500" /><path d="M7 12.500h11M12.500 7v11" stroke="#4c5057" strokeWidth="3" /></Icon>
        </button>
      </div>
    </div>
  );
}

/* ---------- taskbar ---------- */

const TaskViewIcon = () => (
  <Icon w={34} h={36}><g fill="none" stroke="#fff" strokeWidth="1.500"><rect x="8" y="8" width="18" height="21" /><path d="M5 11H1v15h4M29 11h4v15h-4" /></g></Icon>
);
const EdgeIcon = () => (
  <Icon w={34} h={36}>
    <path d="M2 17C3 7 10 2 18 2c10 0 15 7 15 15v4H13c1 7 11 8 18 4v7c-11 6-25 2-25-10 0-5 3-9 7-11-5 0-9 3-11 6zM13 15h11c0-7-10-8-11 0z" fill="#0a78d7" />
  </Icon>
);
const ExplorerIcon = () => (
  <Icon w={36} h={36}>
    <path d="M1 5h12l3 3h18v24H1z" fill="#f3cf63" />
    <path d="M1 10h34v22H1z" fill="#fbe18b" />
    <path d="M7 20h22v13h-5v-6H12v6H7z" fill="#16b5ee" />
    <path d="M3 6h8v1H3z" fill="#51b35b" />
  </Icon>
);
const StoreIcon = () => (
  <Icon w={36} h={38}>
    <path d="M10 12c0-14 14-14 14-1M15 11c0-10 9-10 10-2" fill="none" stroke="#fff" strokeWidth="2" />
    <path d="M1 11l33-2v29L1 34z" fill="#fff" />
    <path d="M6 16l7-1v8H6zM15 15l8-1v9h-8zM6 25h7v8l-7-1zM15 25h8v9l-8-1z" fill="#05080f" />
  </Icon>
);
const OperaIcon = () => (
  <Icon w={36} h={36}>
    <defs><linearGradient id="op" x1="0" y1="0" x2="1" y2="0"><stop offset="0.3" stopColor="#e00f22" /><stop offset="1" stopColor="#ff5a5f" /></linearGradient></defs>
    <path fillRule="evenodd" d="M18 0a18 18 0 1 0 0 36 18 18 0 0 0 0-36zM18 4c5 0 8 6 8 14s-3 14-8 14-8-6-8-14 3-14 8-14z" fill="url(#op)" />
  </Icon>
);
const FirefoxIcon = () => (
  <Icon w={36} h={36}>
    <defs><linearGradient id="ff" x1="0" y1="1" x2="1" y2="0"><stop offset="0" stopColor="#d8391c" /><stop offset="0.5" stopColor="#f48a1f" /><stop offset="1" stopColor="#ffe04a" /></linearGradient></defs>
    <circle cx="18" cy="18" r="17" fill="#2279bd" />
    <path d="M9 4c6-5 17-3 21 4l-2 8-8 3-6-4z" fill="#3f9ed6" />
    <path d="M2 9l3 2c2-2 4-3 7-3l-1 4 5 3-5 3c0 7 9 9 15 5 4-3 5-8 3-14 7 6 7 15 2 21-6 8-19 8-26 1C0 25 0 16 2 9z" fill="url(#ff)" />
    <path d="M11 18c2-1 6-1 8 1-2 3-5 4-8 3z" fill="#a63a16" />
  </Icon>
);
const PowerPointIcon = () => (
  <Icon w={36} h={36}>
    <path d="M19 6h16v25H19z" fill="#fff" stroke="#d24726" />
    <path d="M26 11a5 5 0 1 0 6 6h-6zM28 9v6h5a5 5 0 0 0-5-6z" fill="#d24726" />
    <path d="M22 24h10M22 28h10" stroke="#d24726" strokeWidth="2" />
    <path d="M1 4l20-4v36L1 32z" fill="#d24726" />
    <text x="5" y="25" fontFamily="Open Sans" fontWeight="700" fontSize="19" fill="#fff">P</text>
  </Icon>
);
const PdfIcon = () => (
  <Icon w={36} h={36}>
    <rect x="1" y="1" width="34" height="34" rx="2" fill="#d5e8f8" />
    <path d="M1 22h34v12H1z" fill="#9cc6ea" />
    <path d="M6 1h3v11H6z" fill="#7b3fd0" /><path d="M9 1h2v10H9z" fill="#2e9fe0" /><path d="M11 1h2v9h-2z" fill="#f0d12a" /><path d="M13 1h2v8h-2z" fill="#ee5a2a" />
    <path d="M5 18c8-6 19-6 27 1-8 5-18 5-27-1z" fill="#8cc0e4" stroke="#23619c" strokeWidth="1.500" />
    <circle cx="20" cy="17" r="4" fill="#2e86bd" /><circle cx="20" cy="17" r="2" fill="#0c2c4a" />
    <path d="M14 24h22v11H14z" fill="#ee3a24" />
    <text x="15" y="33" fontFamily="Open Sans" fontWeight="700" fontSize="10" fill="#fff">PDF</text>
  </Icon>
);
const PlayerIcon = () => (
  <Icon w={36} h={36}>
    <path d="M25 5l8 2v23l-8 3z" fill="#8ab8d6" />
    <path d="M2 5h27v28H2z" fill="#a7cde2" stroke="#6f9fbe" />
    <circle cx="14" cy="18" r="10.500" fill="#f07c1c" stroke="#fde1bf" />
    <path d="M10 11l12 7-12 7z" fill="#fff" />
  </Icon>
);
const ExcelIcon = () => (
  <Icon w={36} h={36}>
    <path d="M7 1h27v33H1V7z" fill="#f5fbf4" stroke="#3c9b3f" strokeWidth="2" />
    <path d="M4 29V9l5-5h22v26z" fill="#cfe8c8" />
    <path d="M5 6h7l4 6 5-8h7l-8 13 7 11h-8l-4-6-5 6H4l8-11z" fill="#359b3a" />
    <path d="M16 18l20 5-5 12-19-3z" fill="#fbfdfb" stroke="#8db98c" />
    <path d="M18 23l12 3M17 27l12 3" stroke="#6fae6d" />
  </Icon>
);
const WordIcon = () => (
  <Icon w={36} h={36}>
    <path d="M7 1h27v33H1V7z" fill="#f3f8fe" stroke="#3b67b5" strokeWidth="2" />
    <path d="M4 29V9l5-5h22v26z" fill="#c6daf3" />
    <path d="M5 6h6l1 11 4-11h5l1 11 4-11h6l-8 20h-6l-1-9-4 9H7z" fill="#2b58b0" />
    <path d="M26 22l9-3v14l-11 2z" fill="#fbfdff" stroke="#9ab3d9" />
  </Icon>
);
const VlcIcon = () => (
  <Icon w={36} h={36}>
    <path d="M6 26h24l4 9H2z" fill="#f58a12" />
    <path d="M15 1h5l8 27q-10 5-20 0z" fill="#f28b1a" />
    <path d="M13 7h9l2 7q-6 3-13 0z" fill="#eee" />
    <path d="M10 19q7 4 16 0l1 6q-9 4-19 0z" fill="#eee" />
  </Icon>
);

const apps: { name: string; icon: React.ReactNode; w: string; open?: boolean; active?: boolean }[] = [
  { name: "Affichage des tâches", icon: <TaskViewIcon />, w: "w-[76px]" },
  { name: "Edge", icon: <EdgeIcon />, w: "w-[77px]" },
  { name: "Explorateur", icon: <ExplorerIcon />, w: "w-[78px]", open: true },
  { name: "Store", icon: <StoreIcon />, w: "w-[76px]" },
  { name: "Opera", icon: <OperaIcon />, w: "w-[77px]", open: true },
  { name: "Firefox", icon: <FirefoxIcon />, w: "w-[77px]" },
  { name: "PowerPoint", icon: <PowerPointIcon />, w: "w-[76px]", open: true },
  { name: "PDF", icon: <PdfIcon />, w: "w-[77px]", open: true },
  { name: "Lecteur", icon: <PlayerIcon />, w: "w-[76px]", open: true },
  { name: "Excel", icon: <ExcelIcon />, w: "w-[76px]", open: true, active: true },
  { name: "Word", icon: <WordIcon />, w: "w-[77px]", open: true },
  { name: "VLC", icon: <VlcIcon />, w: "w-[77px]", open: true },
];

function Taskbar() {
  return (
    <footer className="flex h-[63px] items-stretch bg-[#02050c] text-white">
      <button type="button" aria-label="Démarrer" className="flex w-[75px] items-center justify-center">
        <Icon w={25} h={25}><path d="M0 3l10-1v10H0zM11 2l14-2v12H11zM0 13h10v10L0 22zM11 13h14v12l-14-2z" fill="#fff" /></Icon>
      </button>
      <input aria-label="Rechercher" placeholder="Rechercher sur le web et dans Windows" className="w-[537px] bg-[#333] px-[19px] text-[22px] outline-none placeholder:text-[#9c9c9c] placeholder:opacity-100" />
      {apps.map((a) => (
        <button key={a.name} type="button" aria-label={a.name} className={`relative flex items-center justify-center ${a.w} ${a.active ? "bg-[#33373f]" : ""}`}>
          {a.icon}
          {a.open && <span className={`absolute bottom-0 h-[3px] bg-[#76b9ed] ${a.active ? "inset-x-0" : "inset-x-[7px]"}`} />}
        </button>
      ))}
      <div className="ml-auto flex items-center gap-[14px]">
        <button type="button" aria-label="Icônes cachées"><Icon w={20} h={14}><path d="M1 12l9-9 9 9" fill="none" stroke="#fff" strokeWidth="2" /></Icon></button>
        <span className="ml-[3px]">
          <Icon w={22} h={24}><path d="M1 10h20M8 10l4-7M12 20h4M9 10l4 10" stroke="#777" strokeWidth="1.200" fill="none" /><path d="M0 7h6v6H0zM10 1h3v3h-3zM15 19h3v3h-3zM19 8h3v4h-3z" fill="#a8a8a8" /></Icon>
        </span>
        <span>
          <Icon w={27} h={22}><path d="M10 5h14v14H9M24 9h2v6h-2M2 1v4M6 1v4M1 5h7v4q-3 4-6 0zM4 11v8h4" fill="none" stroke="#fff" strokeWidth="1.600" /></Icon>
        </span>
        <span className="-ml-[4px]">
          <Icon w={26} h={24}><path d="M3 16A22 22 0 0 1 24 2M8 18A17 17 0 0 1 24 8M13 20a12 12 0 0 1 11-6M17 22a8 8 0 0 1 7-4" fill="none" stroke="#8f8f8f" strokeWidth="2" /><rect x="0" y="10" width="13" height="13" rx="4" fill="#e0182d" /><path d="M4 14l5 5M9 14l-5 5" stroke="#fff" strokeWidth="2" /></Icon>
        </span>
        <span className="-ml-px">
          <Icon w={26} h={22}><path d="M1 8h4l6-6v18l-6-6H1zM14 8q2 3 0 6M18 5q4 6 0 12M22 2q6 9 0 18" fill="none" stroke="#fff" strokeWidth="1.600" /></Icon>
        </span>
        <span className="-ml-[3px]">
          <Icon w={26} h={26}><path d="M0 1h26v20h-9l-4 5-4-5H0z" fill="#fff" /><path d="M5 6h16M5 11h16M5 16h10" stroke="#05080f" strokeWidth="1.800" /></Icon>
        </span>
        <time className="mr-[3px] flex w-[108px] flex-col items-center text-[18px] leading-[26px]">
          <span>00:37</span>
          <span>12/10/2019</span>
        </time>
        <span className="-ml-[9px] h-full w-[7px] border-l border-[#555]" />
      </div>
    </footer>
  );
}

/* ---------- floating elements ---------- */

function ScreenTip() {
  return (
    <div role="tooltip" className="absolute top-[216px] left-[263px] w-[405px] rounded-[3px] border-2 border-[#77797e] bg-linear-to-b from-white to-[#e4e5f0] px-[6px] pt-2 pb-2 text-[17px] leading-[24px] text-[#474a50] shadow-[5px_5px_3px_rgba(90,70,130,0.15)]">
      <p className="font-semibold">Insérer une image à partir d´un fichier</p>
      <p className="mt-3 ml-[13px]">Insérer une image à partir d´un fichier.</p>
      <hr className="mt-[6px] border-t-2 border-[#9b9fac]" />
      <p className="mt-3 flex items-center gap-3 font-semibold"><HelpIcon size={24} />Appuyez sur F1 pour obtenir de l'aide.</p>
    </div>
  );
}

function Callout() {
  return (
    <>
      <span className="absolute top-[256px] left-[384px] h-[19px] w-[19px] rounded-full border-2 border-[#fb0007] bg-[#9dc3e6]" />
      <span className="absolute top-[350px] left-[484px] h-[27px] w-[27px] rounded-full border-2 border-[#fb0007] bg-[#9dc3e6]" />
      <div className="absolute top-[447px] left-[470px] h-[156px] w-[397px]">
        <svg viewBox="540 740 975 470" preserveAspectRatio="none" aria-hidden="true" className="absolute inset-0 h-full w-full">
          <g stroke="#fb0007" strokeWidth="2">
            <path vectorEffect="non-scaling-stroke" fill="#9dc3e6" d="M637 902C620 850 680 790 780 790C810 790 840 796 862 803C900 755 1000 750 1045 785C1080 738 1165 738 1207 775C1270 735 1385 735 1397 808C1480 820 1507 870 1473 912C1545 970 1500 1055 1377 1065C1370 1130 1280 1160 1181 1133C1150 1215 980 1230 913 1159C830 1190 730 1175 678 1120C580 1120 545 1060 595 1017C530 1000 530 910 637 902Z" />
            <path vectorEffect="non-scaling-stroke" fill="none" d="M862 803Q876 808 887 819M1045 785Q1040 792 1038 800M1207 775Q1198 782 1193 792M1397 808L1398 820M1473 912Q1463 928 1442 938M1377 1065C1378 1030 1350 1000 1304 989M1181 1133Q1187 1123 1186 1112M913 1159Q905 1150 899 1138M678 1120Q692 1118 702 1113M595 1017Q620 1024 652 1023M637 902L641 915" />
          </g>
        </svg>
        <p className="absolute inset-x-0 top-[35px] pr-[27px] text-center text-[56px] leading-[76px] font-bold text-white [text-shadow:1px_1px_0_#ed7d31,2px_2px_0_#ed7d31,3px_3px_0_#ed7d31,-1px_0_0_#ed7d31,0_-1px_0_#ed7d31]">Cliquez</p>
      </div>
    </>
  );
}

function Toast() {
  return (
    <aside className="absolute right-0 bottom-[81px] flex h-[187px] w-[562px] bg-[#1f1f1f] pt-[13px] pl-[22px]">
      <Icon w={42} h={68} box="0 0 42 68">
        <path d="M21 10l20 41H1z" fill="#ffe400" />
        <path d="M21 25v15" stroke="#222" strokeWidth="3" />
        <circle cx="21" cy="45" r="1.800" fill="#222" />
      </Icon>
      <div className="ml-[21px] w-[430px] text-[22px] leading-[31px] text-[#a3a3a3]">
        <p className="font-semibold text-white">Périphérique USB non reconnu</p>
        <p>Le dernier périphérique USB que vous<br />avez connecté à cet ordinateur a mal<br />fonctionné et Windows ne le reconnaît<br />pas.</p>
      </div>
    </aside>
  );
}

function Watermark() {
  return (
    <div className="pointer-events-none absolute right-[80px] bottom-[113px] w-[491px] whitespace-nowrap text-[#8f8f8f]/80">
      <p className="text-[29px] leading-[38px]">Activer Windows</p>
      <p className="text-[22px] leading-[34px]">Accédez aux paramètres pour activer Windows.</p>
    </div>
  );
}

export default function App() {
  return (
    <div className="relative flex h-screen flex-col overflow-hidden bg-white font-[Open_Sans,sans-serif]">
      <TitleBar />
      <MenuTabs />
      <Ribbon />
      <FormulaBar />
      <Sheet />
      <SheetTabs />
      <StatusBar />
      <Taskbar />
      <ScreenTip />
      <Callout />
      <Toast />
      <Watermark />
    </div>
  );
}
